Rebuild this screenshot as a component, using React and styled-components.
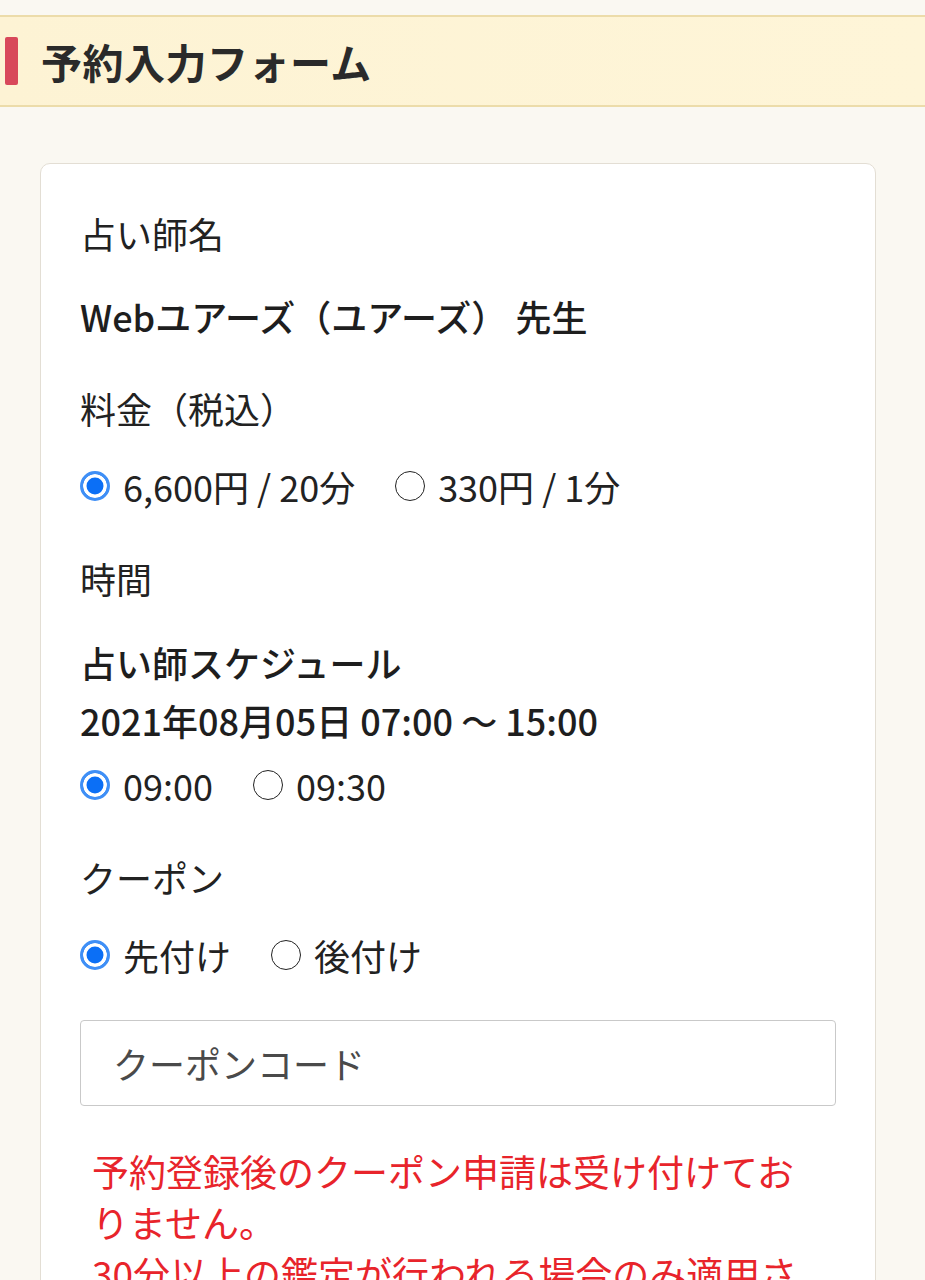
import React, { useState } from 'react'
import styled, { createGlobalStyle } from 'styled-components'

const GlobalStyle = createGlobalStyle`
  html, body {
    margin: 0;
    padding: 0;
    background: #faf8f2;
  }
  body {
    font-family: 'Noto Sans CJK JP', 'Noto Sans', sans-serif;
    color: #222;
  }
  * {
    box-sizing: border-box;
  }
`

const PRICES = [
  { value: 'p20', label: '6,600円 / 20分' },
  { value: 'p1', label: '330円 / 1分' },
]

const TIMES = [
  { value: '0900', label: '09:00' },
  { value: '0930', label: '09:30' },
]

const COUPON_TIMING = [
  { value: 'before', label: '先付け' },
  { value: 'after', label: '後付け' },
]

const RadioGroup = ({ name, options, value, onChange }) => (
  <RadioRow>
    {options.map((opt) => (
      <RadioItem key={opt.value}>
        <RadioInput
          type='radio'
          name={name}
          value={opt.value}
          checked={value === opt.value}
          onChange={(e) => onChange(e.target.value)}
        />
        <span>{opt.label}</span>
      </RadioItem>
    ))}
  </RadioRow>
)

const App = () => {
  const [form, setForm] = useState({
    price: 'p20',
    time: '0900',
    coupon_timing: 'before',
    coupon_code: '',
  })

  const update = (field) => (value) => {
    setForm((prev) => ({ ...prev, [field]: value }))
  }

  return (
    <>
      <GlobalStyle />
      <Page>
        <Header>
          <HeaderTitle>予約入力フォーム</HeaderTitle>
        </Header>
        <Card>
          <Field>
            <Label>占い師名</Label>
            <Value>Webユアーズ（ユアーズ） 先生</Value>
          </Field>
          <Field>
            <Label>料金（税込）</Label>
            <RadioGroup
              name='price'
              options={PRICES}
              value={form.price}
              onChange={update('price')}
            />
          </Field>
          <Field>
            <Label>時間</Label>
            <Schedule>
              <div>占い師スケジュール</div>
              <div>2021年08月05日 07:00 〜 15:00</div>
            </Schedule>
            <RadioGroup
              name='time'
              options={TIMES}
              value={form.time}
              onChange={update('time')}
            />
          </Field>
          <Field>
            <Label>クーポン</Label>
            <RadioGroup
              name='coupon_timing'
              options={COUPON_TIMING}
              value={form.coupon_timing}
              onChange={update('coupon_timing')}
            />
            <CouponInput
              type='text'
              name='coupon_code'
              placeholder='クーポンコード'
              value={form.coupon_code}
              onChange={(e) => update('coupon_code')(e.target.value)}
              autoComplete='off'
            />
            <Notice>
              <p>予約登録後のクーポン申請は受け付けておりません。</p>
              <p>30分以上の鑑定が行われる場合のみ適用されます。</p>
            </Notice>
          </Field>
        </Card>
      </Page>
    </>
  )
}

const Page = styled.div`
  padding-top: 15px;
  min-height: 1280px;
`

const Header = styled.header`
  display: flex;
  align-items: center;
  height: 92px;
  padding-left: 5px;
  background: linear-gradient(90deg, #fdf3d4 0%, #fef5d8 100%);
  border-top: 2px solid #ecdcaa;
  border-bottom: 2px solid #ecdcaa;
`

const HeaderTitle = styled.h1`
  display: flex;
  align-items: center;
  gap: 23px;
  margin: 0;
  font-size: 41px;
  font-weight: 700;
  color: #2a2a2a;
  letter-spacing: 0.5px;

  &::before {
    content: '';
    display: block;
    width: 13px;
    height: 48px;
    border-radius: 2px;
    background: #d8485a;
  }
`

const Card = styled.section`
  margin: 56px 49px 0 40px;
  padding: 42px 39px 40px;
  background: #fff;
  border: 1px solid #e3ded4;
  border-radius: 10px;
`

const Field = styled.div`
  display: flex;
  flex-direction: column;
  margin-bottom: 38px;
`

const Label = styled.label`
  font-size: 36px;
  line-height: 54px;
  font-weight: 400;
  color: #222;
  margin-bottom: 24px;
`

const Value = styled.p`
  margin: 5px 0 0;
  font-size: 36px;
  line-height: 54px;
  font-weight: 500;
  color: #1e1e1e;
`

const Schedule = styled.div`
  margin: 4px 0 9px;
  font-size: 36px;
  line-height: 58px;
  font-weight: 500;
  color: #1e1e1e;
`

const RadioRow = styled.div`
  display: flex;
  align-items: center;
  gap: 40px;
  height: 54px;
`

const RadioItem = styled.label`
  display: flex;
  align-items: center;
  gap: 13px;
  font-size: 36px;
  line-height: 54px;
  color: #222;
  cursor: pointer;
`

const RadioInput = styled.input`
  appearance: none;
  margin: 0;
  width: 30px;
  height: 30px;
  border-radius: 50%;
  border: 1.5px solid #222;
  background: #fff;
  flex-shrink: 0;
  cursor: pointer;

  &:checked {
    border: 3.5px solid #3f8ff6;
    background: #0b6ff6;
    box-shadow: inset 0 0 0 3.5px #fff;
  }
`

const CouponInput = styled.input`
  margin-top: 38px;
  height: 86px;
  width: 100%;
  padding: 0 32px;
  font-family: inherit;
  font-size: 36px;
  color: #222;
  background: #fff;
  border: 1px solid #c9c9c9;
  border-radius: 4px;
  outline: none;

  &::placeholder {
    color: #4a4a4a;
  }
`

const Notice = styled.div`
  margin-top: 40px;
  padding: 0 12px;
  color: #e8242b;
  font-size: 37px;
  line-height: 51px;

  p {
    margin: 0;
  }
`

export default App
